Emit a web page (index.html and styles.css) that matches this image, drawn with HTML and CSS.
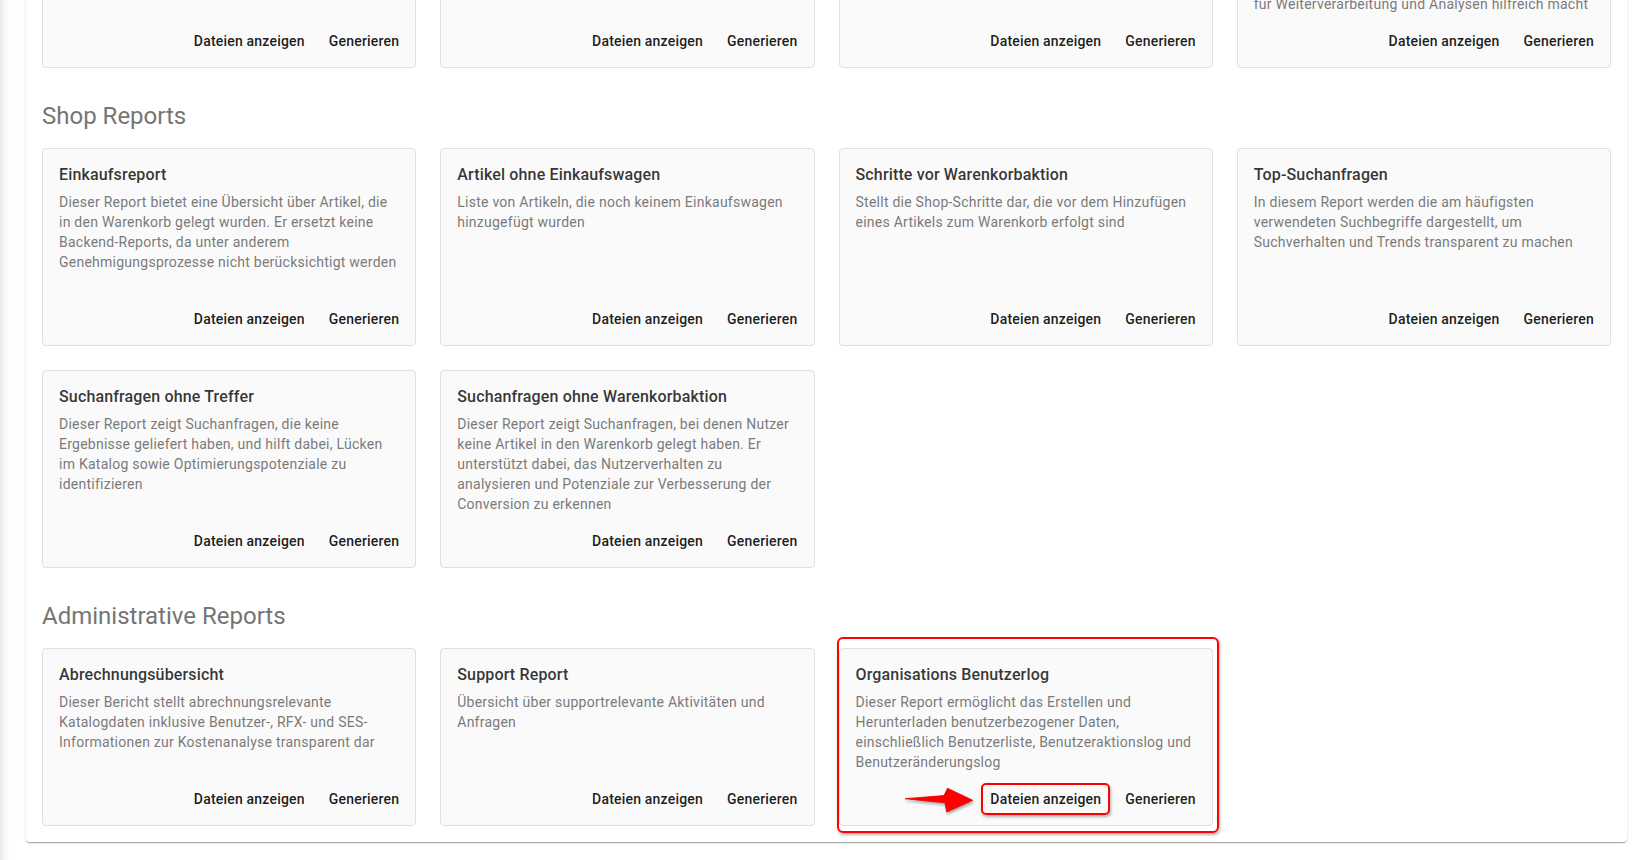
FILE: index.html
```html
<!DOCTYPE html>
<html lang="de">
<head>
<meta charset="utf-8">
<title>Reports</title>
<link rel="stylesheet" href="styles.css">
</head>
<body>
<div class="main">
  <div class="panel">
    <section class="section">
      <h2 class="section-title">Katalog Reports</h2>
      <div class="grid">
        <div class="card">
          <div class="card-body">
            <h3 class="card-title">Katalogübersicht</h3>
            <p class="card-text">Übersicht über alle freigegebenen Kataloge</p>
          </div>
          <div class="card-actions"><button class="btn">Dateien anzeigen</button><button class="btn">Generieren</button></div>
        </div>
        <div class="card">
          <div class="card-body">
            <h3 class="card-title">Preisänderungen</h3>
            <p class="card-text">Liste der Preisänderungen im Katalog</p>
          </div>
          <div class="card-actions"><button class="btn">Dateien anzeigen</button><button class="btn">Generieren</button></div>
        </div>
        <div class="card">
          <div class="card-body">
            <h3 class="card-title">Artikelstatus</h3>
            <p class="card-text">Status aller Artikel im Katalog</p>
          </div>
          <div class="card-actions"><button class="btn">Dateien anzeigen</button><button class="btn">Generieren</button></div>
        </div>
        <div class="card">
          <div class="card-body">
            <h3 class="card-title">Katalogexport</h3>
            <p class="card-text">Dieser Report enthält alle Katalogdaten<br>inklusive Preise und Merkmale in einem<br>strukturierten Exportformat, was ihn<br>für Weiterverarbeitung und Analysen hilfreich macht</p>
          </div>
          <div class="card-actions"><button class="btn">Dateien anzeigen</button><button class="btn">Generieren</button></div>
        </div>
      </div>
    </section>

    <section class="section">
      <h2 class="section-title">Shop Reports</h2>
      <div class="grid">
        <div class="card">
          <div class="card-body">
            <h3 class="card-title">Einkaufsreport</h3>
            <p class="card-text">Dieser Report bietet eine Übersicht über Artikel, die in den Warenkorb gelegt wurden. Er ersetzt keine Backend-Reports, da unter anderem Genehmigungsprozesse nicht berücksichtigt werden</p>
          </div>
          <div class="card-actions"><button class="btn">Dateien anzeigen</button><button class="btn">Generieren</button></div>
        </div>
        <div class="card">
          <div class="card-body">
            <h3 class="card-title">Artikel ohne Einkaufswagen</h3>
            <p class="card-text">Liste von Artikeln, die noch keinem Einkaufswagen hinzugefügt wurden</p>
          </div>
          <div class="card-actions"><button class="btn">Dateien anzeigen</button><button class="btn">Generieren</button></div>
        </div>
        <div class="card">
          <div class="card-body">
            <h3 class="card-title">Schritte vor Warenkorbaktion</h3>
            <p class="card-text">Stellt die Shop-Schritte dar, die vor dem Hinzufügen eines Artikels zum Warenkorb erfolgt sind</p>
          </div>
          <div class="card-actions"><button class="btn">Dateien anzeigen</button><button class="btn">Generieren</button></div>
        </div>
        <div class="card">
          <div class="card-body">
            <h3 class="card-title">Top-Suchanfragen</h3>
            <p class="card-text">In diesem Report werden die am häufigsten verwendeten Suchbegriffe dargestellt, um Suchverhalten und Trends transparent zu machen</p>
          </div>
          <div class="card-actions"><button class="btn">Dateien anzeigen</button><button class="btn">Generieren</button></div>
        </div>
        <div class="card">
          <div class="card-body">
            <h3 class="card-title">Suchanfragen ohne Treffer</h3>
            <p class="card-text">Dieser Report zeigt Suchanfragen, die keine Ergebnisse geliefert haben, und hilft dabei, Lücken im Katalog sowie Optimierungspotenziale zu identifizieren</p>
          </div>
          <div class="card-actions"><button class="btn">Dateien anzeigen</button><button class="btn">Generieren</button></div>
        </div>
        <div class="card">
          <div class="card-body">
            <h3 class="card-title">Suchanfragen ohne Warenkorbaktion</h3>
            <p class="card-text">Dieser Report zeigt Suchanfragen, bei denen Nutzer keine Artikel in den Warenkorb gelegt haben. Er unterstützt dabei, das Nutzerverhalten zu analysieren und Potenziale zur Verbesserung der Conversion zu erkennen</p>
          </div>
          <div class="card-actions"><button class="btn">Dateien anzeigen</button><button class="btn">Generieren</button></div>
        </div>
      </div>
    </section>

    <section class="section">
      <h2 class="section-title">Administrative Reports</h2>
      <div class="grid">
        <div class="card">
          <div class="card-body">
            <h3 class="card-title">Abrechnungsübersicht</h3>
            <p class="card-text">Dieser Bericht stellt abrechnungsrelevante Katalogdaten inklusive Benutzer-, RFX- und SES-Informationen zur Kostenanalyse transparent dar</p>
          </div>
          <div class="card-actions"><button class="btn">Dateien anzeigen</button><button class="btn">Generieren</button></div>
        </div>
        <div class="card">
          <div class="card-body">
            <h3 class="card-title">Support Report</h3>
            <p class="card-text">Übersicht über supportrelevante Aktivitäten und Anfragen</p>
          </div>
          <div class="card-actions"><button class="btn">Dateien anzeigen</button><button class="btn">Generieren</button></div>
        </div>
        <div class="card card-marked">
          <div class="card-body">
            <h3 class="card-title">Organisations Benutzerlog</h3>
            <p class="card-text">Dieser Report ermöglicht das Erstellen und Herunterladen benutzerbezogener Daten, einschließlich Benutzerliste, Benutzeraktionslog und Benutzeränderungslog</p>
          </div>
          <div class="card-actions"><button class="btn btn-marked">Dateien anzeigen<span class="mark-btn"></span></button><button class="btn">Generieren</button></div>
          <span class="mark-card"></span>
          <svg class="mark-arrow" width="76" height="30" viewBox="0 0 76 30" aria-hidden="true">
            <path d="M5 13.7 L44 10.6 L47.5 3.3 L72.7 15.3 L46.7 27 L45 17.8 Z" fill="#ff0000" stroke="#e00000" stroke-width="0.8" stroke-linejoin="round"/>
          </svg>
        </div>
      </div>
    </section>
  </div>
</div>
</body>
</html>
```

FILE: styles.css
```css
html, body {
  margin: 0;
  height: 860px;
  overflow: hidden;
}

body {
  font-family: Roboto, "Liberation Sans", Arial, sans-serif;
  background: linear-gradient(90deg, #e8e8e8 0, #f6f6f6 4px, #ffffff 9px);
}

.main {
  padding: 0 22px 0 26px;
}

.panel {
  margin-top: -174px;
  background: #ffffff;
  border-radius: 4px;
  padding: 16px;
  box-shadow: 0 2px 1px -1px rgba(0, 0, 0, 0.2), 0 1px 1px 0 rgba(0, 0, 0, 0.14), 0 1px 3px 0 rgba(0, 0, 0, 0.12);
}

.section + .section {
  margin-top: 32px;
}

.section-title {
  margin: 0 0 16px;
  font-size: 24px;
  line-height: 32px;
  font-weight: 400;
  color: #757575;
}

.grid {
  display: grid;
  grid-template-columns: repeat(4, 1fr);
  grid-auto-rows: 1fr;
  gap: 24px;
}

.card {
  position: relative;
  display: flex;
  flex-direction: column;
  background: #fafafa;
  border: 1px solid #e0e0e0;
  border-radius: 4px;
}

.card-body {
  padding: 16px 16px 0;
}

.card-title {
  margin: 0 0 7px;
  font-size: 16px;
  line-height: 20px;
  font-weight: 500;
  letter-spacing: 0.15px;
  color: rgba(0, 0, 0, 0.8);
}

.card-text {
  margin: 0;
  font-size: 14px;
  line-height: 20px;
  letter-spacing: 0.25px;
  color: #7a7a7a;
}

.card-actions {
  margin-top: auto;
  display: flex;
  justify-content: flex-end;
  gap: 8px;
  padding: 9px 8px 8px;
}

.btn {
  position: relative;
  height: 36px;
  padding: 0 8px;
  border: none;
  background: transparent;
  font-family: Roboto, "Liberation Sans", Arial, sans-serif;
  font-size: 14px;
  font-weight: 500;
  letter-spacing: 0.2px;
  color: rgba(0, 0, 0, 0.9);
  cursor: pointer;
}

.mark-btn {
  position: absolute;
  top: 2px;
  bottom: 2px;
  left: -1px;
  right: -1px;
  border: 2px solid #ff0000;
  border-radius: 5px;
  box-shadow: 1px 2px 3px rgba(0, 0, 0, 0.3);
  pointer-events: none;
}

.mark-card {
  position: absolute;
  top: -12px;
  bottom: -8px;
  left: -3px;
  right: -7px;
  border: 2px solid #ff0000;
  border-radius: 6px;
  box-shadow: 1px 2px 3px rgba(0, 0, 0, 0.3);
  pointer-events: none;
}

.mark-arrow {
  position: absolute;
  left: 60px;
  top: 136px;
  filter: drop-shadow(1px 2px 1.5px rgba(0, 0, 0, 0.35));
}
```
